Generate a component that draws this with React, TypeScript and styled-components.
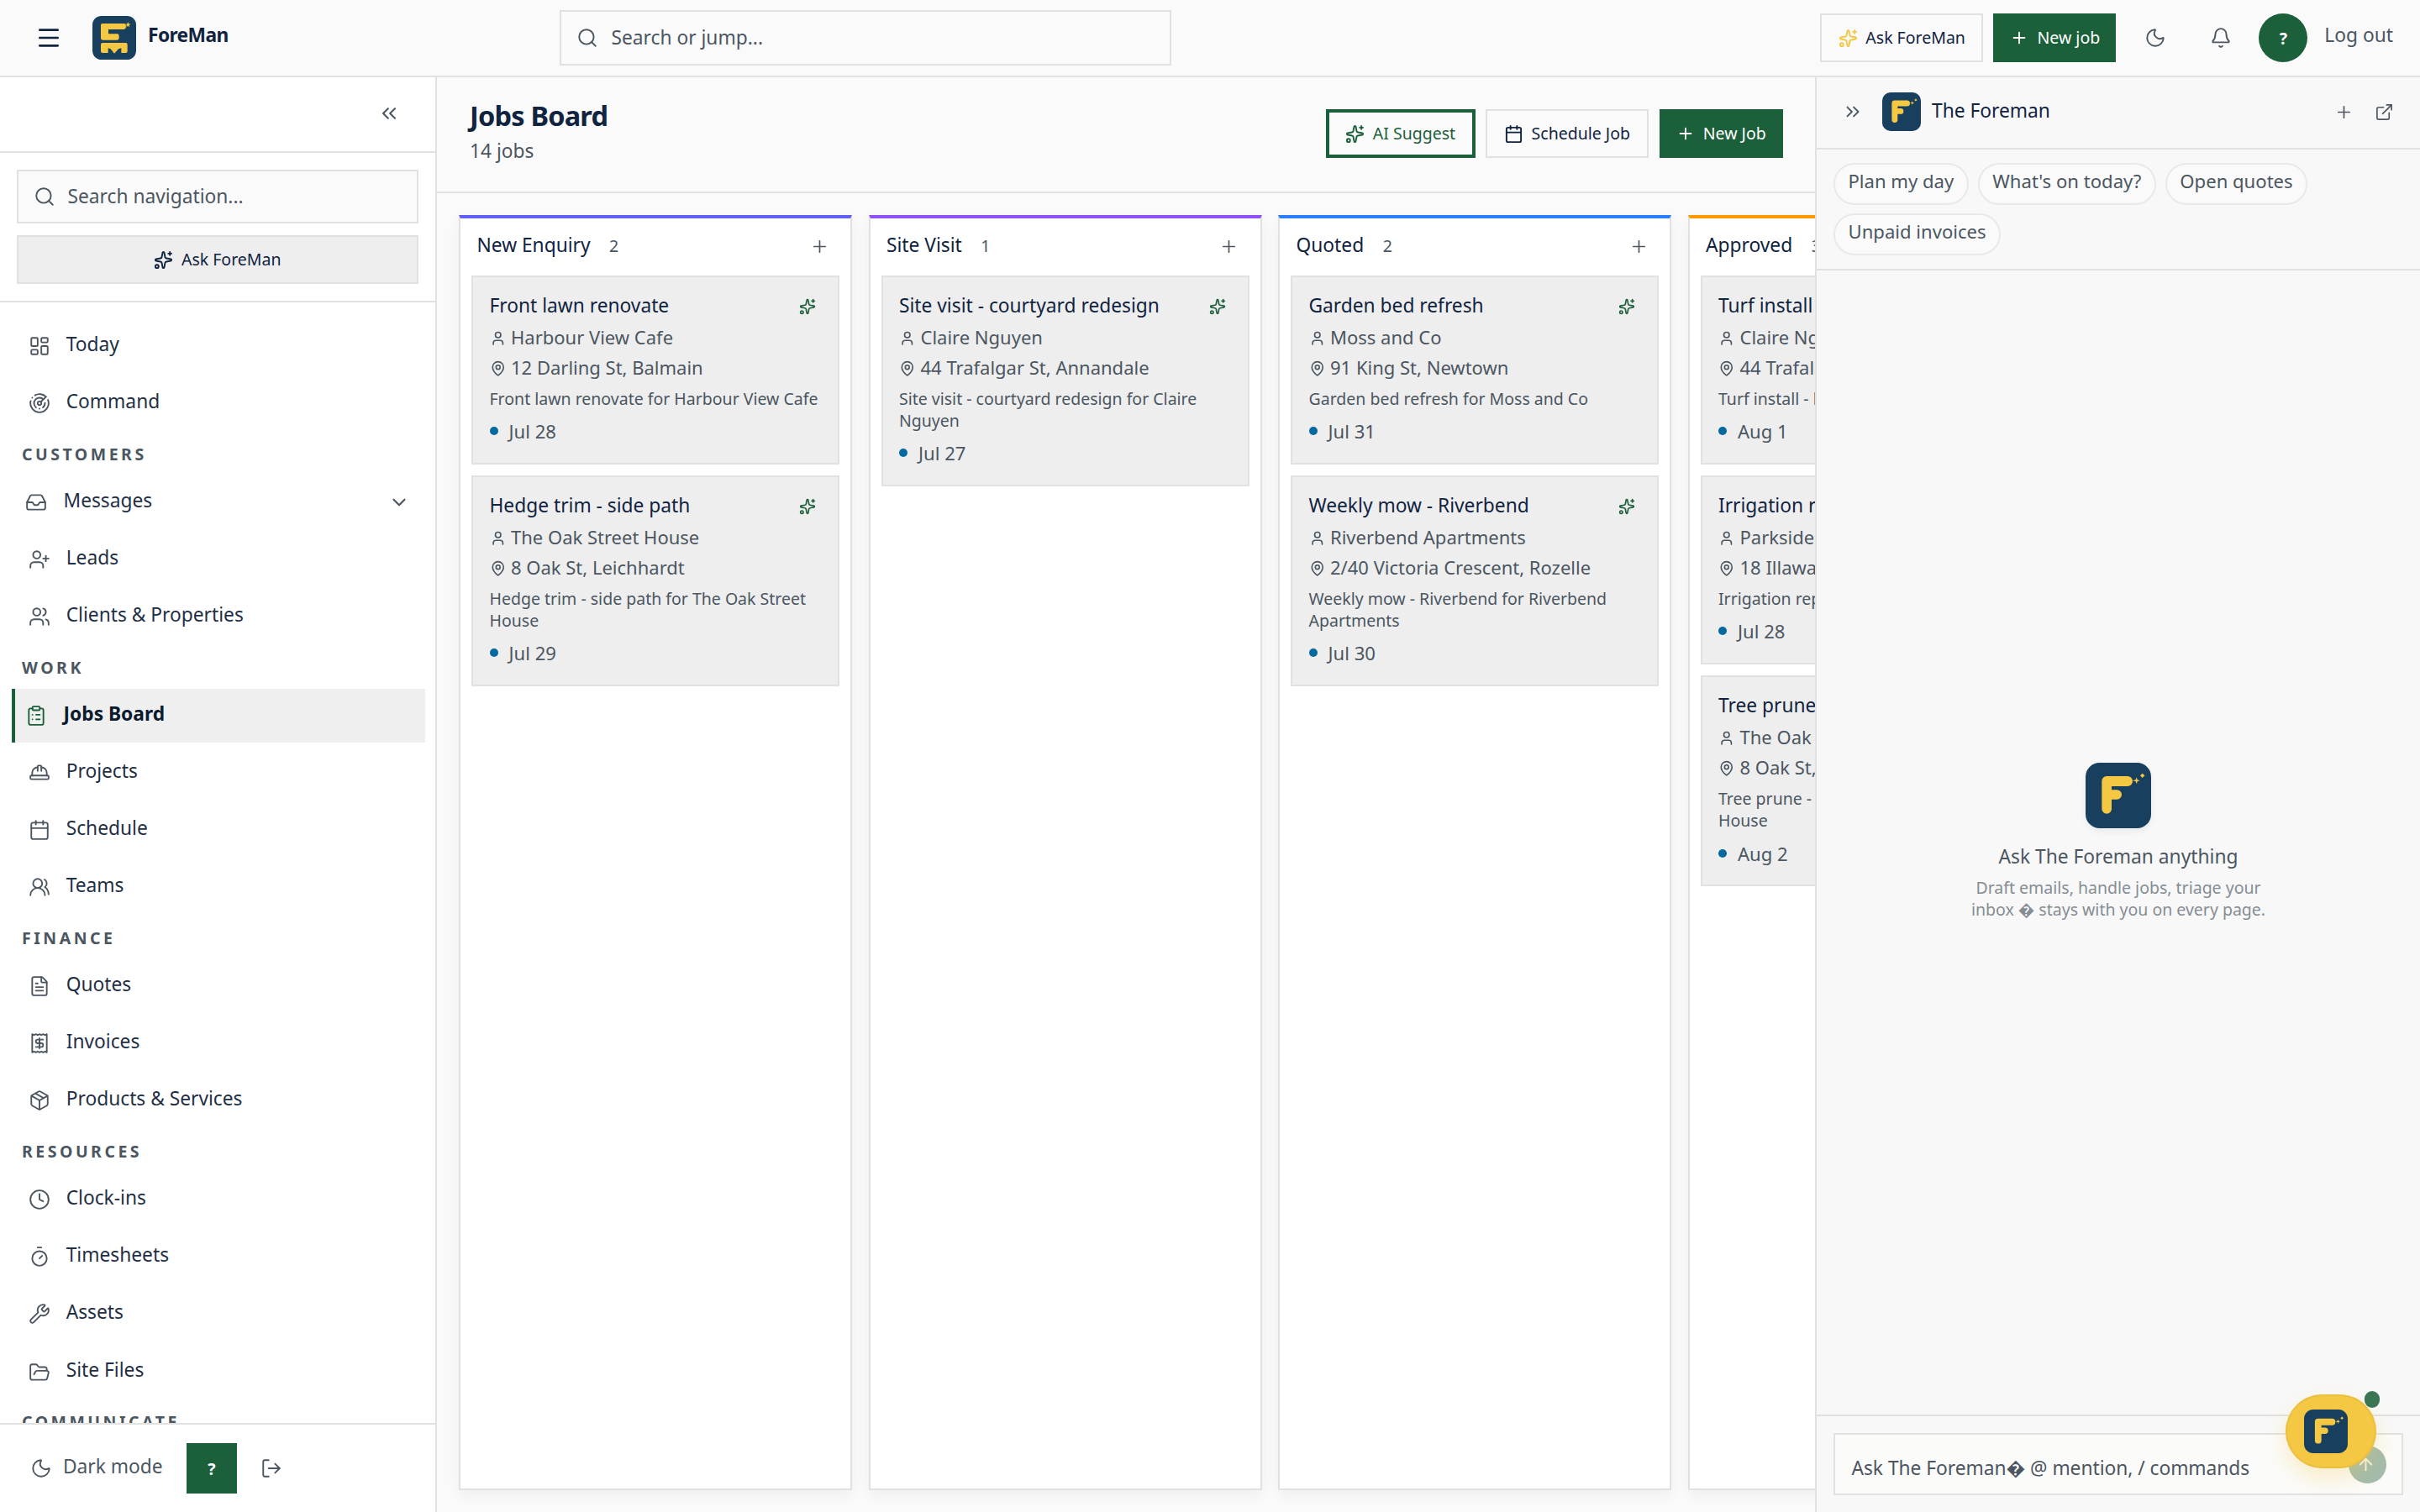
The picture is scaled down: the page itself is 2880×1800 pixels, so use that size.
import styled, { createGlobalStyle } from "styled-components";
import {
    ArrowUp, Bell, Calendar, ChevronDown, ChevronsLeft, ChevronsRight, ClipboardList, Clock,
    ExternalLink, FileText, FolderOpen, HardHat, Inbox, LayoutDashboard, LogOut, MapPin, Menu,
    Moon, Package, Plus, Radar, Receipt, Search, Sparkles, Timer, User, UserPlus, Users,
    UsersRound, Wrench
} from "lucide-react";
import type { LucideIcon } from "lucide-react";

interface I_NavItem {
    label: string;
    icon: LucideIcon;
    active?: boolean;
    expandable?: boolean;
};

interface I_NavSection {
    title?: string;
    items: I_NavItem[];
};

interface I_Job {
    title: string;
    client: string;
    address: string;
    note: string;
    date: string;
};

interface I_Column {
    title: string;
    color: string;
    jobs: I_Job[];
};

interface I_SearchField {
    width: number;
    height: number;
    gap: number;
    text: string;
};

const Colors = {
    navy: "#10233f",
    ink: "#1f2f45",
    muted: "#4b5661",
    faint: "#858d94",
    line: "#e1e1e0",
    page: "#fafafa",
    panel: "#f8f8f8",
    card: "#eeeeee",
    green: "#1c5f3b",
    yellow: "#f5c843",
    logo: "#183f5d"
};

const GlobalStyle = createGlobalStyle`
    * {
        box-sizing: border-box;
    }

    body {
        margin: 0;
        background-color: ${Colors.page};
        color: ${Colors.navy};
        font-family: "Noto Sans", "Liberation Sans", sans-serif;
        font-size: 22.75px;
        overflow: hidden;
    }

    button {
        font-family: inherit;
        color: inherit;
        margin: 0;
        padding: 0;
        border: none;
        background: none;
    }

    svg {
        flex-shrink: 0;
        display: block;
    }
`;

const Page = styled.div`
    width: 2880px;
    height: 1800px;
    display: flex;
    flex-direction: column;
    overflow: hidden;
`;

/* Text that sits slightly above the middle of its row */
const Label = styled.span<{$lift?: number; $color?: string; $bold?: boolean}>`
    line-height: 32px;
    padding-bottom: ${(props) => (props.$lift ?? 0) * 2}px;
    color: ${(props) => props.$color ?? "inherit"};
    font-weight: ${(props) => props.$bold ? 700 : 400};
    white-space: nowrap;
`;

const TopBar = styled.header`
    height: 92px;
    flex-shrink: 0;
    display: flex;
    align-items: center;
    padding: 0 32px 0 42px;
    border-bottom: 2px solid ${Colors.line};
    background-color: ${Colors.page};
`;

const Brand = styled.div`
    width: 624px;
    display: flex;
    align-items: center;
    padding-bottom: 1px;

    > svg:first-child {
        margin-right: 36px;
    }
`;

const BrandName = styled.span`
    margin-left: 14px;
    padding-bottom: 5px;
    font-weight: 700;
    line-height: 32px;
    letter-spacing: -0.6px;
`;

const SearchBox = styled.div<{$width: number; $height: number; $gap: number}>`
    width: ${(props) => props.$width}px;
    height: ${(props) => props.$height}px;
    display: flex;
    align-items: center;
    gap: ${(props) => props.$gap}px;
    padding-left: 18px;
    border: 2px solid ${Colors.line};
    background-color: ${Colors.page};
    color: ${Colors.muted};
`;

const TopActions = styled.div`
    margin-left: auto;
    display: flex;
    align-items: center;
`;

const ButtonPair = styled.div`
    display: flex;
    gap: 12px;
`;

const Button = styled.button<{$kind?: "outline" | "solid" | "accent" | "soft"; $width?: number; $gap?: number}>`
    height: 58px;
    width: ${(props) => props.$width ? `${props.$width}px` : "100%"};
    display: flex;
    align-items: center;
    justify-content: center;
    gap: ${(props) => props.$gap ?? 9.5}px;
    font-size: 19.5px;
    line-height: 26px;
    white-space: nowrap;
    border: 2px solid ${Colors.line};
    ${(props) => props.$kind === "solid" && `
        border-color: ${Colors.green};
        background-color: ${Colors.green};
        color: #ffffff;
    `}
    ${(props) => props.$kind === "accent" && `
        border: 4px solid ${Colors.green};
        color: ${Colors.green};
    `}
    ${(props) => props.$kind === "soft" && `
        background-color: ${Colors.card};
    `}
`;

const IconButton = styled.button<{$width: number}>`
    width: ${(props) => props.$width}px;
    display: flex;
    justify-content: center;
    color: ${Colors.muted};
`;

const Avatar = styled.div<{$size: number; $round?: boolean}>`
    width: ${(props) => props.$size}px;
    height: ${(props) => props.$size}px;
    margin: ${(props) => props.$round ? "0 20px 0 14px" : "0"};
    display: flex;
    align-items: center;
    justify-content: center;
    border-radius: ${(props) => props.$round ? "50%" : "0"};
    background-color: ${Colors.green};
    color: #ffffff;
    font-size: 19.5px;
    font-weight: 700;
`;

const Body = styled.div`
    flex: 1;
    min-height: 0;
    display: flex;
`;

const Sidebar = styled.aside`
    width: 520px;
    flex-shrink: 0;
    display: flex;
    flex-direction: column;
    border-right: 2px solid ${Colors.line};
    background-color: #ffffff;
`;

const SidebarTop = styled.div`
    height: 90px;
    flex-shrink: 0;
    display: flex;
    align-items: center;
    justify-content: flex-end;
    padding: 0 41px 2px 0;
    border-bottom: 2px solid ${Colors.line};
    color: ${Colors.muted};
`;

const SidebarTools = styled.div`
    display: flex;
    flex-direction: column;
    gap: 14px;
    padding: 20px;
    border-bottom: 2px solid ${Colors.line};
`;

const Nav = styled.nav`
    flex: 1;
    min-height: 0;
    overflow: hidden;
    display: flex;
    flex-direction: column;
    gap: 4px;
    padding: 20px 12px 0 14px;
`;

const NavTitle = styled.div`
    height: 46px;
    flex-shrink: 0;
    padding: 12px 0 0 12px;
    font-size: 19.5px;
    line-height: 26px;
    font-weight: 700;
    letter-spacing: 3.5px;
    text-transform: uppercase;
    color: ${Colors.muted};
`;

const NavRow = styled.div<{$active?: boolean; $inset?: boolean}>`
    height: 64px;
    flex-shrink: 0;
    display: flex;
    align-items: center;
    gap: ${(props) => props.$active || props.$inset ? 19.5 : 18.7}px;
    padding: 0 18px 0 ${(props) => props.$active ? 12 : props.$inset ? 16 : 20}px;
    border-left: ${(props) => props.$active ? `4px solid ${Colors.green}` : "none"};
    background-color: ${(props) => props.$active ? "#efefef" : "transparent"};
    color: ${(props) => props.$active ? "#0b1a2f" : Colors.ink};

    > svg {
        color: ${(props) => props.$active ? Colors.green : Colors.muted};
    }

    > svg:last-child {
        margin-left: auto;
    }

    &:nth-last-child(2) {
        padding-top: 3px;
    }
`;

const SidebarFoot = styled.div`
    height: 106px;
    flex-shrink: 0;
    display: flex;
    align-items: center;
    padding-left: 36px;
    border-top: 2px solid ${Colors.line};
    color: ${Colors.muted};
`;

const DarkMode = styled.div`
    width: 186px;
    display: flex;
    align-items: center;
    gap: 13px;
`;

const Main = styled.main`
    width: 1640px;
    flex-shrink: 0;
    display: flex;
    flex-direction: column;
    overflow: hidden;
    background-color: ${Colors.page};
`;

const MainHead = styled.div`
    height: 138px;
    flex-shrink: 0;
    display: flex;
    justify-content: space-between;
    padding: 24px 38px 0 39px;
    border-bottom: 2px solid ${Colors.line};
`;

const Title = styled.h1`
    margin: 0;
    font-size: 32.5px;
    line-height: 44px;
    font-weight: 700;
    letter-spacing: -0.8px;
`;

const Subtitle = styled.div`
    margin-top: 3px;
    line-height: 34px;
    color: ${Colors.muted};
`;

const HeadActions = styled.div`
    display: flex;
    gap: 12.5px;
    padding-top: 14px;
`;

const Board = styled.div`
    flex: 1;
    min-height: 0;
    display: flex;
    gap: 19.5px;
    padding: 26px;
`;

const Column = styled.section<{$color: string}>`
    width: 468px;
    flex-shrink: 0;
    border: 2px solid ${Colors.line};
    border-top: 4px solid ${(props) => props.$color};
    background-color: #ffffff;
    box-shadow: 0 6px 16px rgba(16, 24, 40, 0.05);
`;

const ColumnHead = styled.div`
    height: 64px;
    display: flex;
    align-items: center;
    padding: 0 25.5px 0 19.5px;

    > svg {
        margin-left: auto;
        margin-top: 3px;
        color: ${Colors.muted};
    }
`;

const JobCount = styled.span`
    margin-left: 22.5px;
    padding-top: 1px;
    font-size: 19.5px;
    color: ${Colors.muted};
`;

const CardList = styled.div`
    display: flex;
    flex-direction: column;
    gap: 13px;
    padding: 4px 13px 13px;
`;

const Card = styled.article`
    padding: 19.5px 19.5px 0;
    border: 2px solid ${Colors.line};
    background-color: ${Colors.card};
    color: ${Colors.muted};
`;

const CardTitle = styled.div`
    height: 27px;
    margin-bottom: 8px;
    display: flex;
    align-items: center;
    justify-content: space-between;
    padding-right: 6.5px;
    line-height: 27px;
    color: ${Colors.navy};
    white-space: nowrap;

    svg {
        margin-top: 4px;
        color: ${Colors.green};
    }
`;

const CardRow = styled.div`
    height: 36.2px;
    display: flex;
    align-items: center;
    gap: 6px;
    padding-bottom: 3px;
    font-size: 22px;
    line-height: 33px;
    white-space: nowrap;

    svg {
        margin-top: 3px;
    }
`;

const CardNote = styled.div`
    padding-top: 5px;
    font-size: 19.5px;
    line-height: 26px;
`;

const CardDate = styled.div`
    height: 38px;
    margin: 6.5px 0 18.7px;
    display: flex;
    align-items: center;
    gap: 13px;
    font-size: 22.1px;

    &::before {
        content: "";
        width: 10px;
        height: 10px;
        border-radius: 50%;
        background-color: #0369a1;
    }
`;

const Panel = styled.aside`
    width: 720px;
    display: flex;
    flex-direction: column;
    border-left: 2px solid ${Colors.line};
    background-color: ${Colors.panel};
`;

const PanelHead = styled.div`
    height: 86px;
    flex-shrink: 0;
    display: flex;
    align-items: center;
    padding: 0 31px 2px 30px;
    border-bottom: 2px solid ${Colors.line};
    color: ${Colors.muted};
`;

const PanelName = styled.div`
    flex: 1;
    display: flex;
    align-items: center;
    gap: 13px;
    margin-left: 22px;
    line-height: 32px;
    color: ${Colors.navy};

    span {
        padding-bottom: 3px;
    }
`;

const PanelTools = styled.div`
    display: flex;
    gap: 25px;
`;

const Chips = styled.div`
    height: 144px;
    flex-shrink: 0;
    display: flex;
    flex-wrap: wrap;
    align-content: flex-start;
    gap: 10px 11px;
    padding: 16px 100px 0 20px;
    border-bottom: 2px solid ${Colors.line};
`;

const Chip = styled.div`
    height: 50px;
    padding: 3px 15.5px 0;
    border: 2px solid #e9e9e8;
    border-radius: 25px;
    background-color: ${Colors.page};
    color: ${Colors.muted};
    font-size: 22.1px;
    line-height: 33px;
    white-space: nowrap;
`;

const Empty = styled.div`
    flex: 1;
    display: flex;
    flex-direction: column;
    align-items: center;
    justify-content: center;
    padding-bottom: 2px;
`;

const EmptyLogo = styled.div`
    border-radius: 17px;
    box-shadow: 0 4px 8px rgba(16, 24, 40, 0.06);
`;

const EmptyTitle = styled.div`
    margin-top: 17px;
    line-height: 34px;
    color: ${Colors.muted};
`;

const EmptyText = styled.div`
    width: 364px;
    margin-top: 7px;
    font-size: 19.5px;
    line-height: 26px;
    text-align: center;
    color: ${Colors.faint};
`;

const Composer = styled.div`
    height: 116px;
    flex-shrink: 0;
    padding: 20px 20px 0;
    border-top: 2px solid ${Colors.line};
`;

const ComposerBox = styled.div`
    height: 74px;
    display: flex;
    align-items: center;
    justify-content: space-between;
    padding: 0 18px 0 19.5px;
    border: 2px solid ${Colors.line};
    background-color: #fbfbfa;
    color: ${Colors.muted};

    > span {
        padding-top: 9px;
        letter-spacing: -0.03px;
    }
`;

const SendButton = styled.div`
    width: 45px;
    height: 45px;
    display: flex;
    align-items: center;
    justify-content: center;
    padding-right: 4px;
    border-radius: 50%;
    background-color: #a2bbad;
    color: #f5f2e6;
`;

/* Launcher floats over the composer corner */
const Launcher = styled.div`
    position: absolute;
    left: 2720px;
    top: 1660px;
    width: 108px;
    height: 88px;
    display: flex;
    align-items: center;
    padding-left: 22px;
    border-radius: 44px;
    background-color: ${Colors.yellow};
    box-shadow: 0 12px 28px rgba(245, 200, 67, 0.28), inset 0 0 0 2px rgba(226, 184, 62, 0.5);
`;

const LauncherDot = styled.span`
    position: absolute;
    left: 94px;
    top: -4px;
    width: 18px;
    height: 20px;
    border-radius: 9px;
    background-color: #3a7554;
`;

const Sections: I_NavSection[] = [
    {items: [
        {label: "Today", icon: LayoutDashboard},
        {label: "Command", icon: Radar}
    ]},
    {title: "Customers", items: [
        {label: "Messages", icon: Inbox, expandable: true},
        {label: "Leads", icon: UserPlus},
        {label: "Clients & Properties", icon: Users}
    ]},
    {title: "Work", items: [
        {label: "Jobs Board", icon: ClipboardList, active: true},
        {label: "Projects", icon: HardHat},
        {label: "Schedule", icon: Calendar},
        {label: "Teams", icon: UsersRound}
    ]},
    {title: "Finance", items: [
        {label: "Quotes", icon: FileText},
        {label: "Invoices", icon: Receipt},
        {label: "Products & Services", icon: Package}
    ]},
    {title: "Resources", items: [
        {label: "Clock-ins", icon: Clock},
        {label: "Timesheets", icon: Timer},
        {label: "Assets", icon: Wrench},
        {label: "Site Files", icon: FolderOpen}
    ]},
    {title: "Communicate", items: []}
];

const Columns: I_Column[] = [
    {title: "New Enquiry", color: "#625ff6", jobs: [
        {title: "Front lawn renovate", client: "Harbour View Cafe", address: "12 Darling St, Balmain", note: "Front lawn renovate for Harbour View Cafe", date: "Jul 28"},
        {title: "Hedge trim - side path", client: "The Oak Street House", address: "8 Oak St, Leichhardt", note: "Hedge trim - side path for The Oak Street House", date: "Jul 29"}
    ]},
    {title: "Site Visit", color: "#8e51f6", jobs: [
        {title: "Site visit - courtyard redesign", client: "Claire Nguyen", address: "44 Trafalgar St, Annandale", note: "Site visit - courtyard redesign for Claire Nguyen", date: "Jul 27"}
    ]},
    {title: "Quoted", color: "#2b7fff", jobs: [
        {title: "Garden bed refresh", client: "Moss and Co", address: "91 King St, Newtown", note: "Garden bed refresh for Moss and Co", date: "Jul 31"},
        {title: "Weekly mow - Riverbend", client: "Riverbend Apartments", address: "2/40 Victoria Crescent, Rozelle", note: "Weekly mow - Riverbend for Riverbend Apartments", date: "Jul 30"}
    ]},
    {title: "Approved", color: "#fe9a00", jobs: [
        {title: "Turf install - backyard", client: "Claire Nguyen", address: "44 Trafalgar St, Annandale", note: "Turf install - backyard for Claire Nguyen", date: "Aug 1"},
        {title: "Irrigation repair", client: "Parkside Strata", address: "18 Illawarra Rd, Marrickville", note: "Irrigation repair for Parkside Strata", date: "Jul 28"},
        {title: "Tree prune - front", client: "The Oak Street House", address: "8 Oak St, Leichhardt", note: "Tree prune - front for The Oak Street House", date: "Aug 2"}
    ]}
];

const Prompts = ["Plan my day", "What's on today?", "Open quotes", "Unpaid invoices"];

function ForemanLogo({size}: {size: number}){
    return (
        <svg width={size} height={size} viewBox="0 0 234 234">
            <rect width="234" height="234" rx="50" fill={Colors.logo} />
            <path
                d="M75 48H150A18 18 0 0 1 150 84H93V97H112A17 17 0 0 1 112 131H93V165A17 17 0 0 1 58 165V65A17 17 0 0 1 75 48Z"
                fill={Colors.yellow}
            />
            <path d="M182 52L185 61L194 64L185 67L182 76L179 67L168 64L179 61Z" fill={Colors.yellow} />
            <path d="M203 38L211 46L203 54L195 46Z" fill={Colors.yellow} />
        </svg>
    );
}

function BrandLogo(){
    return (
        <svg width="52" height="52" viewBox="0 0 156 156">
            <rect width="156" height="156" rx="32" fill={Colors.logo} />
            <path
                d="M35 27H121V40Q119 48 112 48H57V64H88Q95 64 95 71V78Q95 86 87 86H38Q30 86 30 78V32Q30 27 35 27Z"
                fill={Colors.yellow}
            />
            <path
                d="M36 96H119Q125 96 125 102V126Q125 132 119 132H103V115L93 118L78 134L65 118L56 115V132H36Q30 132 30 126V102Q30 96 36 96Z"
                fill={Colors.yellow}
            />
            <path
                d="M127 19L130 27L138 28L132 33L134 41L127 37L120 41L122 33L116 28L124 27Z"
                fill={Colors.yellow}
                stroke={Colors.logo}
                strokeWidth="2"
            />
        </svg>
    );
}

function NavEntry({item}: {item: I_NavItem}){
    const Icon = item.icon;
    return (
        <NavRow $active={item.active} $inset={item.expandable}>
            <Icon size={26} strokeWidth={1.75} />
            <Label $lift={2.5} $bold={item.active}>{item.label}</Label>
            {item.expandable && <ChevronDown size={26} />}
        </NavRow>
    );
}

function JobCard({job}: {job: I_Job}){
    return (
        <Card>
            <CardTitle>
                {job.title}
                <Sparkles size={20} />
            </CardTitle>
            <CardRow><User size={19.5} />{job.client}</CardRow>
            <CardRow><MapPin size={19.5} />{job.address}</CardRow>
            <CardNote>{job.note}</CardNote>
            <CardDate>{job.date}</CardDate>
        </Card>
    );
}

function SearchField({width, height, gap, text}: I_SearchField){
    return (
        <SearchBox $width={width} $height={height} $gap={gap}>
            <Search size={26} strokeWidth={1.75} />
            <Label $lift={0.5}>{text}</Label>
        </SearchBox>
    );
}

export default function App(){
    return (
        <Page>
            <GlobalStyle />
            <TopBar>
                <Brand>
                    <Menu size={32} />
                    <BrandLogo />
                    <BrandName>ForeMan</BrandName>
                </Brand>
                <SearchField width={728} height={66} gap={15.5} text="Search or jump..." />
                <TopActions>
                    <ButtonPair>
                        <Button $width={194}>
                            <Sparkles size={23} color={Colors.yellow} />
                            Ask ForeMan
                        </Button>
                        <Button $kind="solid" $width={146} $gap={11}>
                            <Plus size={22} />
                            New job
                        </Button>
                    </ButtonPair>
                    <IconButton $width={94}><Moon size={26} strokeWidth={1.75} /></IconButton>
                    <IconButton $width={62}><Bell size={26} strokeWidth={1.75} /></IconButton>
                    <Avatar $size={58} $round>?</Avatar>
                    <Label $lift={3} $color={Colors.muted}>Log out</Label>
                </TopActions>
            </TopBar>
            <Body>
                <Sidebar>
                    <SidebarTop><ChevronsLeft size={28} strokeWidth={1.75} /></SidebarTop>
                    <SidebarTools>
                        <SearchField width={478} height={64} gap={14.5} text="Search navigation..." />
                        <Button $kind="soft">
                            <Sparkles size={23} />
                            Ask ForeMan
                        </Button>
                    </SidebarTools>
                    <Nav>
                        {
                            Sections.map((section) => [
                                section.title && <NavTitle key={section.title}>{section.title}</NavTitle>,
                                ...section.items.map((item) => <NavEntry key={item.label} item={item} />)
                            ])
                        }
                    </Nav>
                    <SidebarFoot>
                        <DarkMode>
                            <Moon size={26} strokeWidth={1.75} />
                            <Label $lift={2}>Dark mode</Label>
                        </DarkMode>
                        <Avatar $size={60}>?</Avatar>
                        <IconButton $width={82}><LogOut size={26} strokeWidth={1.75} /></IconButton>
                    </SidebarFoot>
                </Sidebar>
                <Main>
                    <MainHead>
                        <div>
                            <Title>Jobs Board</Title>
                            <Subtitle>14 jobs</Subtitle>
                        </div>
                        <HeadActions>
                            <Button $kind="accent" $width={177.5}>
                                <Sparkles size={23} />
                                AI Suggest
                            </Button>
                            <Button $width={194}>
                                <Calendar size={23} />
                                Schedule Job
                            </Button>
                            <Button $kind="solid" $width={147.5} $gap={10}>
                                <Plus size={22} />
                                New Job
                            </Button>
                        </HeadActions>
                    </MainHead>
                    <Board>
                        {
                            Columns.map((column) => (
                                <Column key={column.title} $color={column.color}>
                                    <ColumnHead>
                                        <Label>{column.title}</Label>
                                        <JobCount>{column.jobs.length}</JobCount>
                                        <Plus size={23} strokeWidth={1.75} />
                                    </ColumnHead>
                                    <CardList>
                                        {column.jobs.map((job) => <JobCard key={job.title} job={job} />)}
                                    </CardList>
                                </Column>
                            ))
                        }
                    </Board>
                </Main>
                <Panel>
                    <PanelHead>
                        <ChevronsRight size={26} strokeWidth={1.75} />
                        <PanelName>
                            <ForemanLogo size={46} />
                            <span>The Foreman</span>
                        </PanelName>
                        <PanelTools>
                            <Plus size={23} strokeWidth={1.75} />
                            <ExternalLink size={23} strokeWidth={1.75} />
                        </PanelTools>
                    </PanelHead>
                    <Chips>
                        {Prompts.map((prompt) => <Chip key={prompt}>{prompt}</Chip>)}
                    </Chips>
                    <Empty>
                        <EmptyLogo><ForemanLogo size={78} /></EmptyLogo>
                        <EmptyTitle>Ask The Foreman anything</EmptyTitle>
                        <EmptyText>Draft emails, handle jobs, triage your inbox {"\uFFFD"} stays with you on every page.</EmptyText>
                    </Empty>
                    <Composer>
                        <ComposerBox>
                            <Label>Ask The Foreman{"\uFFFD"} @ mention, / commands</Label>
                            <SendButton><ArrowUp size={23} /></SendButton>
                        </ComposerBox>
                    </Composer>
                </Panel>
            </Body>
            <Launcher>
                <ForemanLogo size={52} />
                <LauncherDot />
            </Launcher>
        </Page>
    );
}
